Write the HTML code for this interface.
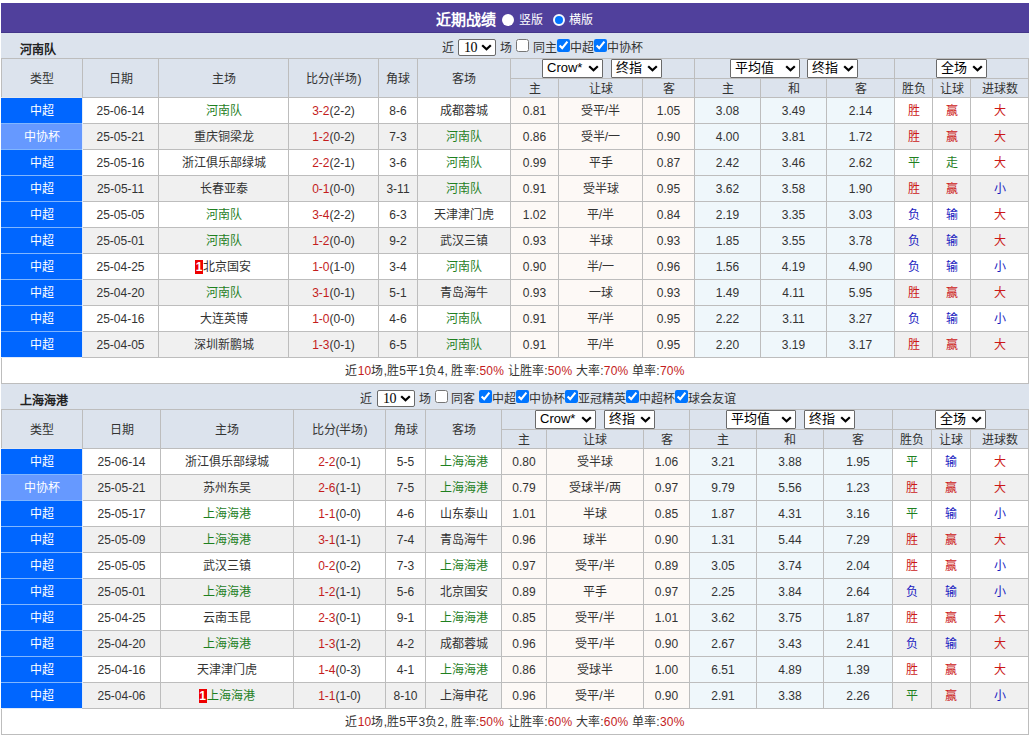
<!DOCTYPE html>
<html lang="zh-CN"><head><meta charset="utf-8"><title>近期战绩</title>
<style>
*{margin:0;padding:0;box-sizing:border-box}
html,body{width:1031px;height:736px;overflow:hidden;background:#fff}
body{position:relative;font-family:"Liberation Sans",sans-serif;font-size:12px;color:#333}
body>div{position:absolute;white-space:nowrap;overflow:visible}
.tn{font-weight:bold;color:#222}
.bd{display:inline-block;background:#e00;color:#fff;font-weight:bold;margin-left:-1px;width:8px;height:14px;line-height:14px;text-align:center;vertical-align:middle;margin-top:-2px}
.sel{position:absolute;height:19px;background:#fff;border:1px solid #6a6a6a;border-radius:1px;font-size:13px;line-height:16px;padding-left:4px;color:#000;text-align:left}
.sel svg{position:absolute;right:3px;top:5px}
.s10{position:absolute;height:17px;background:#fff;border:1px solid #6a6a6a;border-radius:2px;font-family:"Liberation Serif",serif;font-size:14px;line-height:15px;padding-left:5px;color:#000;text-align:left;letter-spacing:-0.5px}
.s10 svg{position:absolute;right:3px;top:3.5px}
.icb{position:absolute;margin:0;width:13px;height:13px}
.cb{display:inline-block;width:13px;height:13px;border:1px solid #767676;border-radius:2px;background:#fff;vertical-align:middle;position:relative;top:-1px}
.cb.on{background:#0075ff;border-color:#0075ff}
.cb.on:after{content:"";position:absolute;left:3px;top:0px;width:4px;height:8px;border-right:2px solid #fff;border-bottom:2px solid #fff;transform:rotate(40deg)}
</style></head><body>
<div style="left:1px;top:3px;width:1028px;height:30px;background:#50409c"></div>
<div style="left:1px;top:32px;width:1028px;height:1px;background:#43368a"></div>
<div style="left:1px;top:33px;width:1028px;height:1px;background:#f0ecff"></div>
<div style="left:436px;top:3px;height:30px;line-height:33px;color:#fff;font-size:15px;font-weight:900">近期战绩</div>
<div class="rd" style="left:502px;top:14px;width:12px;height:12px;border-radius:50%;background:#fff"></div>
<div style="left:519px;top:3px;height:30px;line-height:34px;color:#fff">竖版</div>
<div style="left:553px;top:14px;width:12px;height:12px;border-radius:50%;background:#0075ff;border:2px solid #f4f8ff"></div>
<div style="left:569px;top:3px;height:30px;line-height:34px;color:#fff">横版</div>
<div style="left:1px;top:33px;width:1028px;height:25px;background:#dce3ed"></div>
<div class="tn" style="left:20px;top:33px;height:25px;line-height:34px">河南队</div>
<div style="left:442px;top:33px;height:25px;line-height:31px">近</div>
<div class="s10" style="left:458px;top:39px;width:38px">10<svg width="11" height="7" viewBox="0 0 11 7"><polyline points="1.2,1.2 5.5,5.3 9.8,1.2" fill="none" stroke="#000" stroke-width="2.2"/></svg></div>
<div style="left:500px;top:33px;height:25px;line-height:31px">场</div>
<input type="checkbox" class="icb" style="left:516px;top:39px">
<div style="left:533px;top:33px;height:25px;line-height:31px">同主</div>
<input type="checkbox" class="icb" style="left:557px;top:39px" checked>
<div style="left:570px;top:33px;height:25px;line-height:31px">中超</div>
<input type="checkbox" class="icb" style="left:594px;top:39px" checked>
<div style="left:607px;top:33px;height:25px;line-height:31px">中协杯</div>
<div style="left:1px;top:58px;width:1028px;height:39px;background:#dce3ed"></div>
<div style="left:2px;top:59px;width:80px;height:38px;line-height:40px;text-align:center;">类型</div>
<div style="left:83px;top:59px;width:75px;height:38px;line-height:40px;text-align:center;">日期</div>
<div style="left:159px;top:59px;width:129px;height:38px;line-height:40px;text-align:center;">主场</div>
<div style="left:289px;top:59px;width:89px;height:38px;line-height:40px;text-align:center;">比分(半场)</div>
<div style="left:379px;top:59px;width:38px;height:38px;line-height:40px;text-align:center;">角球</div>
<div style="left:418px;top:59px;width:92px;height:38px;line-height:40px;text-align:center;">客场</div>
<div style="left:511px;top:79px;width:47px;height:18px;line-height:20px;text-align:center;line-height:21px;">主</div>
<div style="left:559px;top:79px;width:83px;height:18px;line-height:20px;text-align:center;line-height:21px;">让球</div>
<div style="left:643px;top:79px;width:51px;height:18px;line-height:20px;text-align:center;line-height:21px;">客</div>
<div style="left:695px;top:79px;width:65px;height:18px;line-height:20px;text-align:center;line-height:21px;">主</div>
<div style="left:761px;top:79px;width:65px;height:18px;line-height:20px;text-align:center;line-height:21px;">和</div>
<div style="left:827px;top:79px;width:67px;height:18px;line-height:20px;text-align:center;line-height:21px;">客</div>
<div style="left:895px;top:79px;width:37px;height:18px;line-height:20px;text-align:center;line-height:21px;">胜负</div>
<div style="left:933px;top:79px;width:37px;height:18px;line-height:20px;text-align:center;line-height:21px;">让球</div>
<div style="left:971px;top:79px;width:57px;height:18px;line-height:20px;text-align:center;line-height:21px;">进球数</div>
<div class="sel" style="left:542px;top:59px;width:61px">Crow*<svg width="11" height="7" viewBox="0 0 11 7"><polyline points="1.2,1.2 5.5,5.3 9.8,1.2" fill="none" stroke="#000" stroke-width="2.2"/></svg></div>
<div class="sel" style="left:611px;top:59px;width:51px">终指<svg width="11" height="7" viewBox="0 0 11 7"><polyline points="1.2,1.2 5.5,5.3 9.8,1.2" fill="none" stroke="#000" stroke-width="2.2"/></svg></div>
<div class="sel" style="left:730px;top:59px;width:70px">平均值<svg width="11" height="7" viewBox="0 0 11 7"><polyline points="1.2,1.2 5.5,5.3 9.8,1.2" fill="none" stroke="#000" stroke-width="2.2"/></svg></div>
<div class="sel" style="left:807px;top:59px;width:51px">终指<svg width="11" height="7" viewBox="0 0 11 7"><polyline points="1.2,1.2 5.5,5.3 9.8,1.2" fill="none" stroke="#000" stroke-width="2.2"/></svg></div>
<div class="sel" style="left:936px;top:59px;width:51px">全场<svg width="11" height="7" viewBox="0 0 11 7"><polyline points="1.2,1.2 5.5,5.3 9.8,1.2" fill="none" stroke="#000" stroke-width="2.2"/></svg></div>
<div style="left:1px;top:98px;width:81px;height:26px;background:#0066ff;line-height:27px;text-align:center;color:#fff;z-index:2">中超</div>
<div style="left:83px;top:98px;width:75px;height:25px;background:#ffffff;line-height:27px;text-align:center;">25-06-14</div>
<div style="left:159px;top:98px;width:129px;height:25px;background:#ffffff;line-height:27px;text-align:center;"><span style="color:#1f801f">河南队</span></div>
<div style="left:289px;top:98px;width:89px;height:25px;background:#ffffff;line-height:27px;text-align:center;"><span style="color:#c41c1c">3-2</span>(2-2)</div>
<div style="left:379px;top:98px;width:38px;height:25px;background:#ffffff;line-height:27px;text-align:center;">8-6</div>
<div style="left:418px;top:98px;width:92px;height:25px;background:#ffffff;line-height:27px;text-align:center;">成都蓉城</div>
<div style="left:511px;top:98px;width:47px;height:25px;background:#fdf9f6;line-height:27px;text-align:center;">0.81</div>
<div style="left:559px;top:98px;width:83px;height:25px;background:#fdf9f6;line-height:27px;text-align:center;">受平/半</div>
<div style="left:643px;top:98px;width:51px;height:25px;background:#fdf9f6;line-height:27px;text-align:center;">1.05</div>
<div style="left:695px;top:98px;width:65px;height:25px;background:#eff7fb;line-height:27px;text-align:center;">3.08</div>
<div style="left:761px;top:98px;width:65px;height:25px;background:#eff7fb;line-height:27px;text-align:center;">3.49</div>
<div style="left:827px;top:98px;width:67px;height:25px;background:#eff7fb;line-height:27px;text-align:center;">2.14</div>
<div style="left:895px;top:98px;width:37px;height:25px;background:#ffffff;line-height:27px;text-align:center;"><span style="color:#cc1818">胜</span></div>
<div style="left:933px;top:98px;width:37px;height:25px;background:#ffffff;line-height:27px;text-align:center;"><span style="color:#cc1818">赢</span></div>
<div style="left:971px;top:98px;width:57px;height:25px;background:#ffffff;line-height:27px;text-align:center;"><span style="color:#cc1818">大</span></div>
<div style="left:1px;top:124px;width:81px;height:26px;background:#6699ff;line-height:27px;text-align:center;color:#fff;z-index:2">中协杯</div>
<div style="left:83px;top:124px;width:75px;height:25px;background:#f0f0f0;line-height:27px;text-align:center;">25-05-21</div>
<div style="left:159px;top:124px;width:129px;height:25px;background:#f0f0f0;line-height:27px;text-align:center;">重庆铜梁龙</div>
<div style="left:289px;top:124px;width:89px;height:25px;background:#f0f0f0;line-height:27px;text-align:center;"><span style="color:#c41c1c">1-2</span>(0-2)</div>
<div style="left:379px;top:124px;width:38px;height:25px;background:#f0f0f0;line-height:27px;text-align:center;">7-3</div>
<div style="left:418px;top:124px;width:92px;height:25px;background:#f0f0f0;line-height:27px;text-align:center;"><span style="color:#1f801f">河南队</span></div>
<div style="left:511px;top:124px;width:47px;height:25px;background:#fdf9f6;line-height:27px;text-align:center;">0.86</div>
<div style="left:559px;top:124px;width:83px;height:25px;background:#fdf9f6;line-height:27px;text-align:center;">受半/一</div>
<div style="left:643px;top:124px;width:51px;height:25px;background:#fdf9f6;line-height:27px;text-align:center;">0.90</div>
<div style="left:695px;top:124px;width:65px;height:25px;background:#eff7fb;line-height:27px;text-align:center;">4.00</div>
<div style="left:761px;top:124px;width:65px;height:25px;background:#eff7fb;line-height:27px;text-align:center;">3.81</div>
<div style="left:827px;top:124px;width:67px;height:25px;background:#eff7fb;line-height:27px;text-align:center;">1.72</div>
<div style="left:895px;top:124px;width:37px;height:25px;background:#f0f0f0;line-height:27px;text-align:center;"><span style="color:#cc1818">胜</span></div>
<div style="left:933px;top:124px;width:37px;height:25px;background:#f0f0f0;line-height:27px;text-align:center;"><span style="color:#cc1818">赢</span></div>
<div style="left:971px;top:124px;width:57px;height:25px;background:#f0f0f0;line-height:27px;text-align:center;"><span style="color:#cc1818">大</span></div>
<div style="left:1px;top:150px;width:81px;height:26px;background:#0066ff;line-height:27px;text-align:center;color:#fff;z-index:2">中超</div>
<div style="left:83px;top:150px;width:75px;height:25px;background:#ffffff;line-height:27px;text-align:center;">25-05-16</div>
<div style="left:159px;top:150px;width:129px;height:25px;background:#ffffff;line-height:27px;text-align:center;">浙江俱乐部绿城</div>
<div style="left:289px;top:150px;width:89px;height:25px;background:#ffffff;line-height:27px;text-align:center;"><span style="color:#c41c1c">2-2</span>(2-1)</div>
<div style="left:379px;top:150px;width:38px;height:25px;background:#ffffff;line-height:27px;text-align:center;">3-6</div>
<div style="left:418px;top:150px;width:92px;height:25px;background:#ffffff;line-height:27px;text-align:center;"><span style="color:#1f801f">河南队</span></div>
<div style="left:511px;top:150px;width:47px;height:25px;background:#fdf9f6;line-height:27px;text-align:center;">0.99</div>
<div style="left:559px;top:150px;width:83px;height:25px;background:#fdf9f6;line-height:27px;text-align:center;">平手</div>
<div style="left:643px;top:150px;width:51px;height:25px;background:#fdf9f6;line-height:27px;text-align:center;">0.87</div>
<div style="left:695px;top:150px;width:65px;height:25px;background:#eff7fb;line-height:27px;text-align:center;">2.42</div>
<div style="left:761px;top:150px;width:65px;height:25px;background:#eff7fb;line-height:27px;text-align:center;">3.46</div>
<div style="left:827px;top:150px;width:67px;height:25px;background:#eff7fb;line-height:27px;text-align:center;">2.62</div>
<div style="left:895px;top:150px;width:37px;height:25px;background:#ffffff;line-height:27px;text-align:center;"><span style="color:#1f801f">平</span></div>
<div style="left:933px;top:150px;width:37px;height:25px;background:#ffffff;line-height:27px;text-align:center;"><span style="color:#1f801f">走</span></div>
<div style="left:971px;top:150px;width:57px;height:25px;background:#ffffff;line-height:27px;text-align:center;"><span style="color:#cc1818">大</span></div>
<div style="left:1px;top:176px;width:81px;height:26px;background:#0066ff;line-height:27px;text-align:center;color:#fff;z-index:2">中超</div>
<div style="left:83px;top:176px;width:75px;height:25px;background:#f0f0f0;line-height:27px;text-align:center;">25-05-11</div>
<div style="left:159px;top:176px;width:129px;height:25px;background:#f0f0f0;line-height:27px;text-align:center;">长春亚泰</div>
<div style="left:289px;top:176px;width:89px;height:25px;background:#f0f0f0;line-height:27px;text-align:center;"><span style="color:#c41c1c">0-1</span>(0-0)</div>
<div style="left:379px;top:176px;width:38px;height:25px;background:#f0f0f0;line-height:27px;text-align:center;">3-11</div>
<div style="left:418px;top:176px;width:92px;height:25px;background:#f0f0f0;line-height:27px;text-align:center;"><span style="color:#1f801f">河南队</span></div>
<div style="left:511px;top:176px;width:47px;height:25px;background:#fdf9f6;line-height:27px;text-align:center;">0.91</div>
<div style="left:559px;top:176px;width:83px;height:25px;background:#fdf9f6;line-height:27px;text-align:center;">受半球</div>
<div style="left:643px;top:176px;width:51px;height:25px;background:#fdf9f6;line-height:27px;text-align:center;">0.95</div>
<div style="left:695px;top:176px;width:65px;height:25px;background:#eff7fb;line-height:27px;text-align:center;">3.62</div>
<div style="left:761px;top:176px;width:65px;height:25px;background:#eff7fb;line-height:27px;text-align:center;">3.58</div>
<div style="left:827px;top:176px;width:67px;height:25px;background:#eff7fb;line-height:27px;text-align:center;">1.90</div>
<div style="left:895px;top:176px;width:37px;height:25px;background:#f0f0f0;line-height:27px;text-align:center;"><span style="color:#cc1818">胜</span></div>
<div style="left:933px;top:176px;width:37px;height:25px;background:#f0f0f0;line-height:27px;text-align:center;"><span style="color:#cc1818">赢</span></div>
<div style="left:971px;top:176px;width:57px;height:25px;background:#f0f0f0;line-height:27px;text-align:center;"><span style="color:#1a1ac0">小</span></div>
<div style="left:1px;top:202px;width:81px;height:26px;background:#0066ff;line-height:27px;text-align:center;color:#fff;z-index:2">中超</div>
<div style="left:83px;top:202px;width:75px;height:25px;background:#ffffff;line-height:27px;text-align:center;">25-05-05</div>
<div style="left:159px;top:202px;width:129px;height:25px;background:#ffffff;line-height:27px;text-align:center;"><span style="color:#1f801f">河南队</span></div>
<div style="left:289px;top:202px;width:89px;height:25px;background:#ffffff;line-height:27px;text-align:center;"><span style="color:#c41c1c">3-4</span>(2-2)</div>
<div style="left:379px;top:202px;width:38px;height:25px;background:#ffffff;line-height:27px;text-align:center;">6-3</div>
<div style="left:418px;top:202px;width:92px;height:25px;background:#ffffff;line-height:27px;text-align:center;">天津津门虎</div>
<div style="left:511px;top:202px;width:47px;height:25px;background:#fdf9f6;line-height:27px;text-align:center;">1.02</div>
<div style="left:559px;top:202px;width:83px;height:25px;background:#fdf9f6;line-height:27px;text-align:center;">平/半</div>
<div style="left:643px;top:202px;width:51px;height:25px;background:#fdf9f6;line-height:27px;text-align:center;">0.84</div>
<div style="left:695px;top:202px;width:65px;height:25px;background:#eff7fb;line-height:27px;text-align:center;">2.19</div>
<div style="left:761px;top:202px;width:65px;height:25px;background:#eff7fb;line-height:27px;text-align:center;">3.35</div>
<div style="left:827px;top:202px;width:67px;height:25px;background:#eff7fb;line-height:27px;text-align:center;">3.03</div>
<div style="left:895px;top:202px;width:37px;height:25px;background:#ffffff;line-height:27px;text-align:center;"><span style="color:#1a1ac0">负</span></div>
<div style="left:933px;top:202px;width:37px;height:25px;background:#ffffff;line-height:27px;text-align:center;"><span style="color:#1a1ac0">输</span></div>
<div style="left:971px;top:202px;width:57px;height:25px;background:#ffffff;line-height:27px;text-align:center;"><span style="color:#cc1818">大</span></div>
<div style="left:1px;top:228px;width:81px;height:26px;background:#0066ff;line-height:27px;text-align:center;color:#fff;z-index:2">中超</div>
<div style="left:83px;top:228px;width:75px;height:25px;background:#f0f0f0;line-height:27px;text-align:center;">25-05-01</div>
<div style="left:159px;top:228px;width:129px;height:25px;background:#f0f0f0;line-height:27px;text-align:center;"><span style="color:#1f801f">河南队</span></div>
<div style="left:289px;top:228px;width:89px;height:25px;background:#f0f0f0;line-height:27px;text-align:center;"><span style="color:#c41c1c">1-2</span>(0-0)</div>
<div style="left:379px;top:228px;width:38px;height:25px;background:#f0f0f0;line-height:27px;text-align:center;">9-2</div>
<div style="left:418px;top:228px;width:92px;height:25px;background:#f0f0f0;line-height:27px;text-align:center;">武汉三镇</div>
<div style="left:511px;top:228px;width:47px;height:25px;background:#fdf9f6;line-height:27px;text-align:center;">0.93</div>
<div style="left:559px;top:228px;width:83px;height:25px;background:#fdf9f6;line-height:27px;text-align:center;">半球</div>
<div style="left:643px;top:228px;width:51px;height:25px;background:#fdf9f6;line-height:27px;text-align:center;">0.93</div>
<div style="left:695px;top:228px;width:65px;height:25px;background:#eff7fb;line-height:27px;text-align:center;">1.85</div>
<div style="left:761px;top:228px;width:65px;height:25px;background:#eff7fb;line-height:27px;text-align:center;">3.55</div>
<div style="left:827px;top:228px;width:67px;height:25px;background:#eff7fb;line-height:27px;text-align:center;">3.78</div>
<div style="left:895px;top:228px;width:37px;height:25px;background:#f0f0f0;line-height:27px;text-align:center;"><span style="color:#1a1ac0">负</span></div>
<div style="left:933px;top:228px;width:37px;height:25px;background:#f0f0f0;line-height:27px;text-align:center;"><span style="color:#1a1ac0">输</span></div>
<div style="left:971px;top:228px;width:57px;height:25px;background:#f0f0f0;line-height:27px;text-align:center;"><span style="color:#cc1818">大</span></div>
<div style="left:1px;top:254px;width:81px;height:26px;background:#0066ff;line-height:27px;text-align:center;color:#fff;z-index:2">中超</div>
<div style="left:83px;top:254px;width:75px;height:25px;background:#ffffff;line-height:27px;text-align:center;">25-04-25</div>
<div style="left:159px;top:254px;width:129px;height:25px;background:#ffffff;line-height:27px;text-align:center;"><span class="bd">1</span>北京国安</div>
<div style="left:289px;top:254px;width:89px;height:25px;background:#ffffff;line-height:27px;text-align:center;"><span style="color:#c41c1c">1-0</span>(1-0)</div>
<div style="left:379px;top:254px;width:38px;height:25px;background:#ffffff;line-height:27px;text-align:center;">3-4</div>
<div style="left:418px;top:254px;width:92px;height:25px;background:#ffffff;line-height:27px;text-align:center;"><span style="color:#1f801f">河南队</span></div>
<div style="left:511px;top:254px;width:47px;height:25px;background:#fdf9f6;line-height:27px;text-align:center;">0.90</div>
<div style="left:559px;top:254px;width:83px;height:25px;background:#fdf9f6;line-height:27px;text-align:center;">半/一</div>
<div style="left:643px;top:254px;width:51px;height:25px;background:#fdf9f6;line-height:27px;text-align:center;">0.96</div>
<div style="left:695px;top:254px;width:65px;height:25px;background:#eff7fb;line-height:27px;text-align:center;">1.56</div>
<div style="left:761px;top:254px;width:65px;height:25px;background:#eff7fb;line-height:27px;text-align:center;">4.19</div>
<div style="left:827px;top:254px;width:67px;height:25px;background:#eff7fb;line-height:27px;text-align:center;">4.90</div>
<div style="left:895px;top:254px;width:37px;height:25px;background:#ffffff;line-height:27px;text-align:center;"><span style="color:#1a1ac0">负</span></div>
<div style="left:933px;top:254px;width:37px;height:25px;background:#ffffff;line-height:27px;text-align:center;"><span style="color:#1a1ac0">输</span></div>
<div style="left:971px;top:254px;width:57px;height:25px;background:#ffffff;line-height:27px;text-align:center;"><span style="color:#1a1ac0">小</span></div>
<div style="left:1px;top:280px;width:81px;height:26px;background:#0066ff;line-height:27px;text-align:center;color:#fff;z-index:2">中超</div>
<div style="left:83px;top:280px;width:75px;height:25px;background:#f0f0f0;line-height:27px;text-align:center;">25-04-20</div>
<div style="left:159px;top:280px;width:129px;height:25px;background:#f0f0f0;line-height:27px;text-align:center;"><span style="color:#1f801f">河南队</span></div>
<div style="left:289px;top:280px;width:89px;height:25px;background:#f0f0f0;line-height:27px;text-align:center;"><span style="color:#c41c1c">3-1</span>(0-1)</div>
<div style="left:379px;top:280px;width:38px;height:25px;background:#f0f0f0;line-height:27px;text-align:center;">5-1</div>
<div style="left:418px;top:280px;width:92px;height:25px;background:#f0f0f0;line-height:27px;text-align:center;">青岛海牛</div>
<div style="left:511px;top:280px;width:47px;height:25px;background:#fdf9f6;line-height:27px;text-align:center;">0.93</div>
<div style="left:559px;top:280px;width:83px;height:25px;background:#fdf9f6;line-height:27px;text-align:center;">一球</div>
<div style="left:643px;top:280px;width:51px;height:25px;background:#fdf9f6;line-height:27px;text-align:center;">0.93</div>
<div style="left:695px;top:280px;width:65px;height:25px;background:#eff7fb;line-height:27px;text-align:center;">1.49</div>
<div style="left:761px;top:280px;width:65px;height:25px;background:#eff7fb;line-height:27px;text-align:center;">4.11</div>
<div style="left:827px;top:280px;width:67px;height:25px;background:#eff7fb;line-height:27px;text-align:center;">5.95</div>
<div style="left:895px;top:280px;width:37px;height:25px;background:#f0f0f0;line-height:27px;text-align:center;"><span style="color:#cc1818">胜</span></div>
<div style="left:933px;top:280px;width:37px;height:25px;background:#f0f0f0;line-height:27px;text-align:center;"><span style="color:#cc1818">赢</span></div>
<div style="left:971px;top:280px;width:57px;height:25px;background:#f0f0f0;line-height:27px;text-align:center;"><span style="color:#cc1818">大</span></div>
<div style="left:1px;top:306px;width:81px;height:26px;background:#0066ff;line-height:27px;text-align:center;color:#fff;z-index:2">中超</div>
<div style="left:83px;top:306px;width:75px;height:25px;background:#ffffff;line-height:27px;text-align:center;">25-04-16</div>
<div style="left:159px;top:306px;width:129px;height:25px;background:#ffffff;line-height:27px;text-align:center;">大连英博</div>
<div style="left:289px;top:306px;width:89px;height:25px;background:#ffffff;line-height:27px;text-align:center;"><span style="color:#c41c1c">1-0</span>(0-0)</div>
<div style="left:379px;top:306px;width:38px;height:25px;background:#ffffff;line-height:27px;text-align:center;">4-6</div>
<div style="left:418px;top:306px;width:92px;height:25px;background:#ffffff;line-height:27px;text-align:center;"><span style="color:#1f801f">河南队</span></div>
<div style="left:511px;top:306px;width:47px;height:25px;background:#fdf9f6;line-height:27px;text-align:center;">0.91</div>
<div style="left:559px;top:306px;width:83px;height:25px;background:#fdf9f6;line-height:27px;text-align:center;">平/半</div>
<div style="left:643px;top:306px;width:51px;height:25px;background:#fdf9f6;line-height:27px;text-align:center;">0.95</div>
<div style="left:695px;top:306px;width:65px;height:25px;background:#eff7fb;line-height:27px;text-align:center;">2.22</div>
<div style="left:761px;top:306px;width:65px;height:25px;background:#eff7fb;line-height:27px;text-align:center;">3.11</div>
<div style="left:827px;top:306px;width:67px;height:25px;background:#eff7fb;line-height:27px;text-align:center;">3.27</div>
<div style="left:895px;top:306px;width:37px;height:25px;background:#ffffff;line-height:27px;text-align:center;"><span style="color:#1a1ac0">负</span></div>
<div style="left:933px;top:306px;width:37px;height:25px;background:#ffffff;line-height:27px;text-align:center;"><span style="color:#1a1ac0">输</span></div>
<div style="left:971px;top:306px;width:57px;height:25px;background:#ffffff;line-height:27px;text-align:center;"><span style="color:#1a1ac0">小</span></div>
<div style="left:1px;top:332px;width:81px;height:25px;background:#0066ff;line-height:27px;text-align:center;color:#fff;z-index:2">中超</div>
<div style="left:83px;top:332px;width:75px;height:25px;background:#f0f0f0;line-height:27px;text-align:center;">25-04-05</div>
<div style="left:159px;top:332px;width:129px;height:25px;background:#f0f0f0;line-height:27px;text-align:center;">深圳新鹏城</div>
<div style="left:289px;top:332px;width:89px;height:25px;background:#f0f0f0;line-height:27px;text-align:center;"><span style="color:#c41c1c">1-3</span>(0-1)</div>
<div style="left:379px;top:332px;width:38px;height:25px;background:#f0f0f0;line-height:27px;text-align:center;">6-5</div>
<div style="left:418px;top:332px;width:92px;height:25px;background:#f0f0f0;line-height:27px;text-align:center;"><span style="color:#1f801f">河南队</span></div>
<div style="left:511px;top:332px;width:47px;height:25px;background:#fdf9f6;line-height:27px;text-align:center;">0.91</div>
<div style="left:559px;top:332px;width:83px;height:25px;background:#fdf9f6;line-height:27px;text-align:center;">平/半</div>
<div style="left:643px;top:332px;width:51px;height:25px;background:#fdf9f6;line-height:27px;text-align:center;">0.95</div>
<div style="left:695px;top:332px;width:65px;height:25px;background:#eff7fb;line-height:27px;text-align:center;">2.20</div>
<div style="left:761px;top:332px;width:65px;height:25px;background:#eff7fb;line-height:27px;text-align:center;">3.19</div>
<div style="left:827px;top:332px;width:67px;height:25px;background:#eff7fb;line-height:27px;text-align:center;">3.17</div>
<div style="left:895px;top:332px;width:37px;height:25px;background:#f0f0f0;line-height:27px;text-align:center;"><span style="color:#cc1818">胜</span></div>
<div style="left:933px;top:332px;width:37px;height:25px;background:#f0f0f0;line-height:27px;text-align:center;"><span style="color:#cc1818">赢</span></div>
<div style="left:971px;top:332px;width:57px;height:25px;background:#f0f0f0;line-height:27px;text-align:center;"><span style="color:#cc1818">大</span></div>
<div style="left:2px;top:358px;width:1026px;height:25px;background:#ffffff;line-height:27px;text-align:center;letter-spacing:0.2px;">近<span style="color:#c41c1c">10</span>场,胜5平1负4, 胜率:<span style="color:#c41c1c">50%</span> 让胜率:<span style="color:#c41c1c">50%</span> 大率:<span style="color:#c41c1c">70%</span> 单率:<span style="color:#c41c1c">70%</span></div>
<div style="left:1px;top:58px;width:1028px;height:1px;background:#bdbdbd"></div>
<div style="left:510px;top:78px;width:519px;height:1px;background:#bdbdbd"></div>
<div style="left:1px;top:97px;width:1028px;height:1px;background:#bdbdbd"></div>
<div style="left:1px;top:123px;width:1028px;height:1px;background:#bdbdbd"></div>
<div style="left:1px;top:149px;width:1028px;height:1px;background:#bdbdbd"></div>
<div style="left:1px;top:175px;width:1028px;height:1px;background:#bdbdbd"></div>
<div style="left:1px;top:201px;width:1028px;height:1px;background:#bdbdbd"></div>
<div style="left:1px;top:227px;width:1028px;height:1px;background:#bdbdbd"></div>
<div style="left:1px;top:253px;width:1028px;height:1px;background:#bdbdbd"></div>
<div style="left:1px;top:279px;width:1028px;height:1px;background:#bdbdbd"></div>
<div style="left:1px;top:305px;width:1028px;height:1px;background:#bdbdbd"></div>
<div style="left:1px;top:331px;width:1028px;height:1px;background:#bdbdbd"></div>
<div style="left:1px;top:357px;width:1028px;height:1px;background:#bdbdbd"></div>
<div style="left:1px;top:383px;width:1028px;height:1px;background:#bdbdbd"></div>
<div style="left:1px;top:58px;width:1px;height:326px;background:#bdbdbd"></div>
<div style="left:82px;top:58px;width:1px;height:300px;background:#bdbdbd"></div>
<div style="left:158px;top:58px;width:1px;height:300px;background:#bdbdbd"></div>
<div style="left:288px;top:58px;width:1px;height:300px;background:#bdbdbd"></div>
<div style="left:378px;top:58px;width:1px;height:300px;background:#bdbdbd"></div>
<div style="left:417px;top:58px;width:1px;height:300px;background:#bdbdbd"></div>
<div style="left:510px;top:58px;width:1px;height:300px;background:#bdbdbd"></div>
<div style="left:558px;top:78px;width:1px;height:280px;background:#bdbdbd"></div>
<div style="left:642px;top:78px;width:1px;height:280px;background:#bdbdbd"></div>
<div style="left:694px;top:58px;width:1px;height:300px;background:#bdbdbd"></div>
<div style="left:760px;top:78px;width:1px;height:280px;background:#bdbdbd"></div>
<div style="left:826px;top:78px;width:1px;height:280px;background:#bdbdbd"></div>
<div style="left:894px;top:58px;width:1px;height:300px;background:#bdbdbd"></div>
<div style="left:932px;top:78px;width:1px;height:280px;background:#bdbdbd"></div>
<div style="left:970px;top:78px;width:1px;height:280px;background:#bdbdbd"></div>
<div style="left:1028px;top:58px;width:1px;height:326px;background:#bdbdbd"></div>
<div style="left:1px;top:123px;width:81px;height:1px;background:#80b6ff;z-index:3"></div>
<div style="left:1px;top:149px;width:81px;height:1px;background:#80b6ff;z-index:3"></div>
<div style="left:1px;top:175px;width:81px;height:1px;background:#80b6ff;z-index:3"></div>
<div style="left:1px;top:201px;width:81px;height:1px;background:#80b6ff;z-index:3"></div>
<div style="left:1px;top:227px;width:81px;height:1px;background:#80b6ff;z-index:3"></div>
<div style="left:1px;top:253px;width:81px;height:1px;background:#80b6ff;z-index:3"></div>
<div style="left:1px;top:279px;width:81px;height:1px;background:#80b6ff;z-index:3"></div>
<div style="left:1px;top:305px;width:81px;height:1px;background:#80b6ff;z-index:3"></div>
<div style="left:1px;top:331px;width:81px;height:1px;background:#80b6ff;z-index:3"></div>
<div style="left:82px;top:98px;width:1px;height:259px;background:#e2ebf8;z-index:3"></div>
<div style="left:1px;top:97px;width:81px;height:1px;background:#e4e8ef;z-index:3"></div>
<div style="left:1px;top:357px;width:81px;height:1px;background:#dfe9fb;z-index:3"></div>
<div style="left:1px;top:384px;width:1028px;height:25px;background:#dce3ed"></div>
<div class="tn" style="left:20px;top:384px;height:25px;line-height:34px">上海海港</div>
<div style="left:360px;top:384px;height:25px;line-height:31px">近</div>
<div class="s10" style="left:377px;top:390px;width:38px">10<svg width="11" height="7" viewBox="0 0 11 7"><polyline points="1.2,1.2 5.5,5.3 9.8,1.2" fill="none" stroke="#000" stroke-width="2.2"/></svg></div>
<div style="left:419px;top:384px;height:25px;line-height:31px">场</div>
<input type="checkbox" class="icb" style="left:435px;top:390px">
<div style="left:451px;top:384px;height:25px;line-height:31px">同客</div>
<input type="checkbox" class="icb" style="left:479px;top:390px" checked>
<div style="left:492px;top:384px;height:25px;line-height:31px">中超</div>
<input type="checkbox" class="icb" style="left:516px;top:390px" checked>
<div style="left:529px;top:384px;height:25px;line-height:31px">中协杯</div>
<input type="checkbox" class="icb" style="left:565px;top:390px" checked>
<div style="left:578px;top:384px;height:25px;line-height:31px">亚冠精英</div>
<input type="checkbox" class="icb" style="left:626px;top:390px" checked>
<div style="left:639px;top:384px;height:25px;line-height:31px">中超杯</div>
<input type="checkbox" class="icb" style="left:675px;top:390px" checked>
<div style="left:688px;top:384px;height:25px;line-height:31px">球会友谊</div>
<div style="left:1px;top:409px;width:1028px;height:39px;background:#dce3ed"></div>
<div style="left:2px;top:410px;width:80px;height:38px;line-height:40px;text-align:center;">类型</div>
<div style="left:83px;top:410px;width:77px;height:38px;line-height:40px;text-align:center;">日期</div>
<div style="left:161px;top:410px;width:132px;height:38px;line-height:40px;text-align:center;">主场</div>
<div style="left:294px;top:410px;width:91px;height:38px;line-height:40px;text-align:center;">比分(半场)</div>
<div style="left:386px;top:410px;width:39px;height:38px;line-height:40px;text-align:center;">角球</div>
<div style="left:426px;top:410px;width:75px;height:38px;line-height:40px;text-align:center;">客场</div>
<div style="left:502px;top:430px;width:44px;height:18px;line-height:20px;text-align:center;line-height:21px;">主</div>
<div style="left:547px;top:430px;width:96px;height:18px;line-height:20px;text-align:center;line-height:21px;">让球</div>
<div style="left:644px;top:430px;width:45px;height:18px;line-height:20px;text-align:center;line-height:21px;">客</div>
<div style="left:690px;top:430px;width:66px;height:18px;line-height:20px;text-align:center;line-height:21px;">主</div>
<div style="left:757px;top:430px;width:66px;height:18px;line-height:20px;text-align:center;line-height:21px;">和</div>
<div style="left:824px;top:430px;width:68px;height:18px;line-height:20px;text-align:center;line-height:21px;">客</div>
<div style="left:893px;top:430px;width:38px;height:18px;line-height:20px;text-align:center;line-height:21px;">胜负</div>
<div style="left:932px;top:430px;width:38px;height:18px;line-height:20px;text-align:center;line-height:21px;">让球</div>
<div style="left:971px;top:430px;width:57px;height:18px;line-height:20px;text-align:center;line-height:21px;">进球数</div>
<div class="sel" style="left:535px;top:410px;width:61px">Crow*<svg width="11" height="7" viewBox="0 0 11 7"><polyline points="1.2,1.2 5.5,5.3 9.8,1.2" fill="none" stroke="#000" stroke-width="2.2"/></svg></div>
<div class="sel" style="left:604px;top:410px;width:51px">终指<svg width="11" height="7" viewBox="0 0 11 7"><polyline points="1.2,1.2 5.5,5.3 9.8,1.2" fill="none" stroke="#000" stroke-width="2.2"/></svg></div>
<div class="sel" style="left:726px;top:410px;width:70px">平均值<svg width="11" height="7" viewBox="0 0 11 7"><polyline points="1.2,1.2 5.5,5.3 9.8,1.2" fill="none" stroke="#000" stroke-width="2.2"/></svg></div>
<div class="sel" style="left:804px;top:410px;width:51px">终指<svg width="11" height="7" viewBox="0 0 11 7"><polyline points="1.2,1.2 5.5,5.3 9.8,1.2" fill="none" stroke="#000" stroke-width="2.2"/></svg></div>
<div class="sel" style="left:935px;top:410px;width:51px">全场<svg width="11" height="7" viewBox="0 0 11 7"><polyline points="1.2,1.2 5.5,5.3 9.8,1.2" fill="none" stroke="#000" stroke-width="2.2"/></svg></div>
<div style="left:1px;top:449px;width:81px;height:26px;background:#0066ff;line-height:27px;text-align:center;color:#fff;z-index:2">中超</div>
<div style="left:83px;top:449px;width:77px;height:25px;background:#ffffff;line-height:27px;text-align:center;">25-06-14</div>
<div style="left:161px;top:449px;width:132px;height:25px;background:#ffffff;line-height:27px;text-align:center;">浙江俱乐部绿城</div>
<div style="left:294px;top:449px;width:91px;height:25px;background:#ffffff;line-height:27px;text-align:center;"><span style="color:#c41c1c">2-2</span>(0-1)</div>
<div style="left:386px;top:449px;width:39px;height:25px;background:#ffffff;line-height:27px;text-align:center;">5-5</div>
<div style="left:426px;top:449px;width:75px;height:25px;background:#ffffff;line-height:27px;text-align:center;"><span style="color:#1f801f">上海海港</span></div>
<div style="left:502px;top:449px;width:44px;height:25px;background:#fdf9f6;line-height:27px;text-align:center;">0.80</div>
<div style="left:547px;top:449px;width:96px;height:25px;background:#fdf9f6;line-height:27px;text-align:center;">受半球</div>
<div style="left:644px;top:449px;width:45px;height:25px;background:#fdf9f6;line-height:27px;text-align:center;">1.06</div>
<div style="left:690px;top:449px;width:66px;height:25px;background:#eff7fb;line-height:27px;text-align:center;">3.21</div>
<div style="left:757px;top:449px;width:66px;height:25px;background:#eff7fb;line-height:27px;text-align:center;">3.88</div>
<div style="left:824px;top:449px;width:68px;height:25px;background:#eff7fb;line-height:27px;text-align:center;">1.95</div>
<div style="left:893px;top:449px;width:38px;height:25px;background:#ffffff;line-height:27px;text-align:center;"><span style="color:#1f801f">平</span></div>
<div style="left:932px;top:449px;width:38px;height:25px;background:#ffffff;line-height:27px;text-align:center;"><span style="color:#1a1ac0">输</span></div>
<div style="left:971px;top:449px;width:57px;height:25px;background:#ffffff;line-height:27px;text-align:center;"><span style="color:#cc1818">大</span></div>
<div style="left:1px;top:475px;width:81px;height:26px;background:#6699ff;line-height:27px;text-align:center;color:#fff;z-index:2">中协杯</div>
<div style="left:83px;top:475px;width:77px;height:25px;background:#f0f0f0;line-height:27px;text-align:center;">25-05-21</div>
<div style="left:161px;top:475px;width:132px;height:25px;background:#f0f0f0;line-height:27px;text-align:center;">苏州东吴</div>
<div style="left:294px;top:475px;width:91px;height:25px;background:#f0f0f0;line-height:27px;text-align:center;"><span style="color:#c41c1c">2-6</span>(1-1)</div>
<div style="left:386px;top:475px;width:39px;height:25px;background:#f0f0f0;line-height:27px;text-align:center;">7-5</div>
<div style="left:426px;top:475px;width:75px;height:25px;background:#f0f0f0;line-height:27px;text-align:center;"><span style="color:#1f801f">上海海港</span></div>
<div style="left:502px;top:475px;width:44px;height:25px;background:#fdf9f6;line-height:27px;text-align:center;">0.79</div>
<div style="left:547px;top:475px;width:96px;height:25px;background:#fdf9f6;line-height:27px;text-align:center;">受球半/两</div>
<div style="left:644px;top:475px;width:45px;height:25px;background:#fdf9f6;line-height:27px;text-align:center;">0.97</div>
<div style="left:690px;top:475px;width:66px;height:25px;background:#eff7fb;line-height:27px;text-align:center;">9.79</div>
<div style="left:757px;top:475px;width:66px;height:25px;background:#eff7fb;line-height:27px;text-align:center;">5.56</div>
<div style="left:824px;top:475px;width:68px;height:25px;background:#eff7fb;line-height:27px;text-align:center;">1.23</div>
<div style="left:893px;top:475px;width:38px;height:25px;background:#f0f0f0;line-height:27px;text-align:center;"><span style="color:#cc1818">胜</span></div>
<div style="left:932px;top:475px;width:38px;height:25px;background:#f0f0f0;line-height:27px;text-align:center;"><span style="color:#cc1818">赢</span></div>
<div style="left:971px;top:475px;width:57px;height:25px;background:#f0f0f0;line-height:27px;text-align:center;"><span style="color:#cc1818">大</span></div>
<div style="left:1px;top:501px;width:81px;height:26px;background:#0066ff;line-height:27px;text-align:center;color:#fff;z-index:2">中超</div>
<div style="left:83px;top:501px;width:77px;height:25px;background:#ffffff;line-height:27px;text-align:center;">25-05-17</div>
<div style="left:161px;top:501px;width:132px;height:25px;background:#ffffff;line-height:27px;text-align:center;"><span style="color:#1f801f">上海海港</span></div>
<div style="left:294px;top:501px;width:91px;height:25px;background:#ffffff;line-height:27px;text-align:center;"><span style="color:#c41c1c">1-1</span>(0-0)</div>
<div style="left:386px;top:501px;width:39px;height:25px;background:#ffffff;line-height:27px;text-align:center;">4-6</div>
<div style="left:426px;top:501px;width:75px;height:25px;background:#ffffff;line-height:27px;text-align:center;">山东泰山</div>
<div style="left:502px;top:501px;width:44px;height:25px;background:#fdf9f6;line-height:27px;text-align:center;">1.01</div>
<div style="left:547px;top:501px;width:96px;height:25px;background:#fdf9f6;line-height:27px;text-align:center;">半球</div>
<div style="left:644px;top:501px;width:45px;height:25px;background:#fdf9f6;line-height:27px;text-align:center;">0.85</div>
<div style="left:690px;top:501px;width:66px;height:25px;background:#eff7fb;line-height:27px;text-align:center;">1.87</div>
<div style="left:757px;top:501px;width:66px;height:25px;background:#eff7fb;line-height:27px;text-align:center;">4.31</div>
<div style="left:824px;top:501px;width:68px;height:25px;background:#eff7fb;line-height:27px;text-align:center;">3.16</div>
<div style="left:893px;top:501px;width:38px;height:25px;background:#ffffff;line-height:27px;text-align:center;"><span style="color:#1f801f">平</span></div>
<div style="left:932px;top:501px;width:38px;height:25px;background:#ffffff;line-height:27px;text-align:center;"><span style="color:#1a1ac0">输</span></div>
<div style="left:971px;top:501px;width:57px;height:25px;background:#ffffff;line-height:27px;text-align:center;"><span style="color:#1a1ac0">小</span></div>
<div style="left:1px;top:527px;width:81px;height:26px;background:#0066ff;line-height:27px;text-align:center;color:#fff;z-index:2">中超</div>
<div style="left:83px;top:527px;width:77px;height:25px;background:#f0f0f0;line-height:27px;text-align:center;">25-05-09</div>
<div style="left:161px;top:527px;width:132px;height:25px;background:#f0f0f0;line-height:27px;text-align:center;"><span style="color:#1f801f">上海海港</span></div>
<div style="left:294px;top:527px;width:91px;height:25px;background:#f0f0f0;line-height:27px;text-align:center;"><span style="color:#c41c1c">3-1</span>(1-1)</div>
<div style="left:386px;top:527px;width:39px;height:25px;background:#f0f0f0;line-height:27px;text-align:center;">7-4</div>
<div style="left:426px;top:527px;width:75px;height:25px;background:#f0f0f0;line-height:27px;text-align:center;">青岛海牛</div>
<div style="left:502px;top:527px;width:44px;height:25px;background:#fdf9f6;line-height:27px;text-align:center;">0.96</div>
<div style="left:547px;top:527px;width:96px;height:25px;background:#fdf9f6;line-height:27px;text-align:center;">球半</div>
<div style="left:644px;top:527px;width:45px;height:25px;background:#fdf9f6;line-height:27px;text-align:center;">0.90</div>
<div style="left:690px;top:527px;width:66px;height:25px;background:#eff7fb;line-height:27px;text-align:center;">1.31</div>
<div style="left:757px;top:527px;width:66px;height:25px;background:#eff7fb;line-height:27px;text-align:center;">5.44</div>
<div style="left:824px;top:527px;width:68px;height:25px;background:#eff7fb;line-height:27px;text-align:center;">7.29</div>
<div style="left:893px;top:527px;width:38px;height:25px;background:#f0f0f0;line-height:27px;text-align:center;"><span style="color:#cc1818">胜</span></div>
<div style="left:932px;top:527px;width:38px;height:25px;background:#f0f0f0;line-height:27px;text-align:center;"><span style="color:#cc1818">赢</span></div>
<div style="left:971px;top:527px;width:57px;height:25px;background:#f0f0f0;line-height:27px;text-align:center;"><span style="color:#cc1818">大</span></div>
<div style="left:1px;top:553px;width:81px;height:26px;background:#0066ff;line-height:27px;text-align:center;color:#fff;z-index:2">中超</div>
<div style="left:83px;top:553px;width:77px;height:25px;background:#ffffff;line-height:27px;text-align:center;">25-05-05</div>
<div style="left:161px;top:553px;width:132px;height:25px;background:#ffffff;line-height:27px;text-align:center;">武汉三镇</div>
<div style="left:294px;top:553px;width:91px;height:25px;background:#ffffff;line-height:27px;text-align:center;"><span style="color:#c41c1c">0-2</span>(0-2)</div>
<div style="left:386px;top:553px;width:39px;height:25px;background:#ffffff;line-height:27px;text-align:center;">7-3</div>
<div style="left:426px;top:553px;width:75px;height:25px;background:#ffffff;line-height:27px;text-align:center;"><span style="color:#1f801f">上海海港</span></div>
<div style="left:502px;top:553px;width:44px;height:25px;background:#fdf9f6;line-height:27px;text-align:center;">0.97</div>
<div style="left:547px;top:553px;width:96px;height:25px;background:#fdf9f6;line-height:27px;text-align:center;">受平/半</div>
<div style="left:644px;top:553px;width:45px;height:25px;background:#fdf9f6;line-height:27px;text-align:center;">0.89</div>
<div style="left:690px;top:553px;width:66px;height:25px;background:#eff7fb;line-height:27px;text-align:center;">3.05</div>
<div style="left:757px;top:553px;width:66px;height:25px;background:#eff7fb;line-height:27px;text-align:center;">3.74</div>
<div style="left:824px;top:553px;width:68px;height:25px;background:#eff7fb;line-height:27px;text-align:center;">2.04</div>
<div style="left:893px;top:553px;width:38px;height:25px;background:#ffffff;line-height:27px;text-align:center;"><span style="color:#cc1818">胜</span></div>
<div style="left:932px;top:553px;width:38px;height:25px;background:#ffffff;line-height:27px;text-align:center;"><span style="color:#cc1818">赢</span></div>
<div style="left:971px;top:553px;width:57px;height:25px;background:#ffffff;line-height:27px;text-align:center;"><span style="color:#1a1ac0">小</span></div>
<div style="left:1px;top:579px;width:81px;height:26px;background:#0066ff;line-height:27px;text-align:center;color:#fff;z-index:2">中超</div>
<div style="left:83px;top:579px;width:77px;height:25px;background:#f0f0f0;line-height:27px;text-align:center;">25-05-01</div>
<div style="left:161px;top:579px;width:132px;height:25px;background:#f0f0f0;line-height:27px;text-align:center;"><span style="color:#1f801f">上海海港</span></div>
<div style="left:294px;top:579px;width:91px;height:25px;background:#f0f0f0;line-height:27px;text-align:center;"><span style="color:#c41c1c">1-2</span>(1-1)</div>
<div style="left:386px;top:579px;width:39px;height:25px;background:#f0f0f0;line-height:27px;text-align:center;">5-6</div>
<div style="left:426px;top:579px;width:75px;height:25px;background:#f0f0f0;line-height:27px;text-align:center;">北京国安</div>
<div style="left:502px;top:579px;width:44px;height:25px;background:#fdf9f6;line-height:27px;text-align:center;">0.89</div>
<div style="left:547px;top:579px;width:96px;height:25px;background:#fdf9f6;line-height:27px;text-align:center;">平手</div>
<div style="left:644px;top:579px;width:45px;height:25px;background:#fdf9f6;line-height:27px;text-align:center;">0.97</div>
<div style="left:690px;top:579px;width:66px;height:25px;background:#eff7fb;line-height:27px;text-align:center;">2.25</div>
<div style="left:757px;top:579px;width:66px;height:25px;background:#eff7fb;line-height:27px;text-align:center;">3.84</div>
<div style="left:824px;top:579px;width:68px;height:25px;background:#eff7fb;line-height:27px;text-align:center;">2.64</div>
<div style="left:893px;top:579px;width:38px;height:25px;background:#f0f0f0;line-height:27px;text-align:center;"><span style="color:#1a1ac0">负</span></div>
<div style="left:932px;top:579px;width:38px;height:25px;background:#f0f0f0;line-height:27px;text-align:center;"><span style="color:#1a1ac0">输</span></div>
<div style="left:971px;top:579px;width:57px;height:25px;background:#f0f0f0;line-height:27px;text-align:center;"><span style="color:#1a1ac0">小</span></div>
<div style="left:1px;top:605px;width:81px;height:26px;background:#0066ff;line-height:27px;text-align:center;color:#fff;z-index:2">中超</div>
<div style="left:83px;top:605px;width:77px;height:25px;background:#ffffff;line-height:27px;text-align:center;">25-04-25</div>
<div style="left:161px;top:605px;width:132px;height:25px;background:#ffffff;line-height:27px;text-align:center;">云南玉昆</div>
<div style="left:294px;top:605px;width:91px;height:25px;background:#ffffff;line-height:27px;text-align:center;"><span style="color:#c41c1c">2-3</span>(0-1)</div>
<div style="left:386px;top:605px;width:39px;height:25px;background:#ffffff;line-height:27px;text-align:center;">9-1</div>
<div style="left:426px;top:605px;width:75px;height:25px;background:#ffffff;line-height:27px;text-align:center;"><span style="color:#1f801f">上海海港</span></div>
<div style="left:502px;top:605px;width:44px;height:25px;background:#fdf9f6;line-height:27px;text-align:center;">0.85</div>
<div style="left:547px;top:605px;width:96px;height:25px;background:#fdf9f6;line-height:27px;text-align:center;">受平/半</div>
<div style="left:644px;top:605px;width:45px;height:25px;background:#fdf9f6;line-height:27px;text-align:center;">1.01</div>
<div style="left:690px;top:605px;width:66px;height:25px;background:#eff7fb;line-height:27px;text-align:center;">3.62</div>
<div style="left:757px;top:605px;width:66px;height:25px;background:#eff7fb;line-height:27px;text-align:center;">3.75</div>
<div style="left:824px;top:605px;width:68px;height:25px;background:#eff7fb;line-height:27px;text-align:center;">1.87</div>
<div style="left:893px;top:605px;width:38px;height:25px;background:#ffffff;line-height:27px;text-align:center;"><span style="color:#cc1818">胜</span></div>
<div style="left:932px;top:605px;width:38px;height:25px;background:#ffffff;line-height:27px;text-align:center;"><span style="color:#cc1818">赢</span></div>
<div style="left:971px;top:605px;width:57px;height:25px;background:#ffffff;line-height:27px;text-align:center;"><span style="color:#cc1818">大</span></div>
<div style="left:1px;top:631px;width:81px;height:26px;background:#0066ff;line-height:27px;text-align:center;color:#fff;z-index:2">中超</div>
<div style="left:83px;top:631px;width:77px;height:25px;background:#f0f0f0;line-height:27px;text-align:center;">25-04-20</div>
<div style="left:161px;top:631px;width:132px;height:25px;background:#f0f0f0;line-height:27px;text-align:center;"><span style="color:#1f801f">上海海港</span></div>
<div style="left:294px;top:631px;width:91px;height:25px;background:#f0f0f0;line-height:27px;text-align:center;"><span style="color:#c41c1c">1-3</span>(1-2)</div>
<div style="left:386px;top:631px;width:39px;height:25px;background:#f0f0f0;line-height:27px;text-align:center;">4-2</div>
<div style="left:426px;top:631px;width:75px;height:25px;background:#f0f0f0;line-height:27px;text-align:center;">成都蓉城</div>
<div style="left:502px;top:631px;width:44px;height:25px;background:#fdf9f6;line-height:27px;text-align:center;">0.96</div>
<div style="left:547px;top:631px;width:96px;height:25px;background:#fdf9f6;line-height:27px;text-align:center;">受平/半</div>
<div style="left:644px;top:631px;width:45px;height:25px;background:#fdf9f6;line-height:27px;text-align:center;">0.90</div>
<div style="left:690px;top:631px;width:66px;height:25px;background:#eff7fb;line-height:27px;text-align:center;">2.67</div>
<div style="left:757px;top:631px;width:66px;height:25px;background:#eff7fb;line-height:27px;text-align:center;">3.43</div>
<div style="left:824px;top:631px;width:68px;height:25px;background:#eff7fb;line-height:27px;text-align:center;">2.41</div>
<div style="left:893px;top:631px;width:38px;height:25px;background:#f0f0f0;line-height:27px;text-align:center;"><span style="color:#1a1ac0">负</span></div>
<div style="left:932px;top:631px;width:38px;height:25px;background:#f0f0f0;line-height:27px;text-align:center;"><span style="color:#1a1ac0">输</span></div>
<div style="left:971px;top:631px;width:57px;height:25px;background:#f0f0f0;line-height:27px;text-align:center;"><span style="color:#cc1818">大</span></div>
<div style="left:1px;top:657px;width:81px;height:26px;background:#0066ff;line-height:27px;text-align:center;color:#fff;z-index:2">中超</div>
<div style="left:83px;top:657px;width:77px;height:25px;background:#ffffff;line-height:27px;text-align:center;">25-04-16</div>
<div style="left:161px;top:657px;width:132px;height:25px;background:#ffffff;line-height:27px;text-align:center;">天津津门虎</div>
<div style="left:294px;top:657px;width:91px;height:25px;background:#ffffff;line-height:27px;text-align:center;"><span style="color:#c41c1c">1-4</span>(0-3)</div>
<div style="left:386px;top:657px;width:39px;height:25px;background:#ffffff;line-height:27px;text-align:center;">4-1</div>
<div style="left:426px;top:657px;width:75px;height:25px;background:#ffffff;line-height:27px;text-align:center;"><span style="color:#1f801f">上海海港</span></div>
<div style="left:502px;top:657px;width:44px;height:25px;background:#fdf9f6;line-height:27px;text-align:center;">0.86</div>
<div style="left:547px;top:657px;width:96px;height:25px;background:#fdf9f6;line-height:27px;text-align:center;">受球半</div>
<div style="left:644px;top:657px;width:45px;height:25px;background:#fdf9f6;line-height:27px;text-align:center;">1.00</div>
<div style="left:690px;top:657px;width:66px;height:25px;background:#eff7fb;line-height:27px;text-align:center;">6.51</div>
<div style="left:757px;top:657px;width:66px;height:25px;background:#eff7fb;line-height:27px;text-align:center;">4.89</div>
<div style="left:824px;top:657px;width:68px;height:25px;background:#eff7fb;line-height:27px;text-align:center;">1.39</div>
<div style="left:893px;top:657px;width:38px;height:25px;background:#ffffff;line-height:27px;text-align:center;"><span style="color:#cc1818">胜</span></div>
<div style="left:932px;top:657px;width:38px;height:25px;background:#ffffff;line-height:27px;text-align:center;"><span style="color:#cc1818">赢</span></div>
<div style="left:971px;top:657px;width:57px;height:25px;background:#ffffff;line-height:27px;text-align:center;"><span style="color:#cc1818">大</span></div>
<div style="left:1px;top:683px;width:81px;height:25px;background:#0066ff;line-height:27px;text-align:center;color:#fff;z-index:2">中超</div>
<div style="left:83px;top:683px;width:77px;height:25px;background:#f0f0f0;line-height:27px;text-align:center;">25-04-06</div>
<div style="left:161px;top:683px;width:132px;height:25px;background:#f0f0f0;line-height:27px;text-align:center;"><span class="bd">1</span><span style="color:#1f801f">上海海港</span></div>
<div style="left:294px;top:683px;width:91px;height:25px;background:#f0f0f0;line-height:27px;text-align:center;"><span style="color:#c41c1c">1-1</span>(1-0)</div>
<div style="left:386px;top:683px;width:39px;height:25px;background:#f0f0f0;line-height:27px;text-align:center;">8-10</div>
<div style="left:426px;top:683px;width:75px;height:25px;background:#f0f0f0;line-height:27px;text-align:center;">上海申花</div>
<div style="left:502px;top:683px;width:44px;height:25px;background:#fdf9f6;line-height:27px;text-align:center;">0.96</div>
<div style="left:547px;top:683px;width:96px;height:25px;background:#fdf9f6;line-height:27px;text-align:center;">受平/半</div>
<div style="left:644px;top:683px;width:45px;height:25px;background:#fdf9f6;line-height:27px;text-align:center;">0.90</div>
<div style="left:690px;top:683px;width:66px;height:25px;background:#eff7fb;line-height:27px;text-align:center;">2.91</div>
<div style="left:757px;top:683px;width:66px;height:25px;background:#eff7fb;line-height:27px;text-align:center;">3.38</div>
<div style="left:824px;top:683px;width:68px;height:25px;background:#eff7fb;line-height:27px;text-align:center;">2.26</div>
<div style="left:893px;top:683px;width:38px;height:25px;background:#f0f0f0;line-height:27px;text-align:center;"><span style="color:#1f801f">平</span></div>
<div style="left:932px;top:683px;width:38px;height:25px;background:#f0f0f0;line-height:27px;text-align:center;"><span style="color:#cc1818">赢</span></div>
<div style="left:971px;top:683px;width:57px;height:25px;background:#f0f0f0;line-height:27px;text-align:center;"><span style="color:#1a1ac0">小</span></div>
<div style="left:2px;top:709px;width:1026px;height:25px;background:#ffffff;line-height:27px;text-align:center;letter-spacing:0.2px;">近<span style="color:#c41c1c">10</span>场,胜5平3负2, 胜率:<span style="color:#c41c1c">50%</span> 让胜率:<span style="color:#c41c1c">60%</span> 大率:<span style="color:#c41c1c">60%</span> 单率:<span style="color:#c41c1c">30%</span></div>
<div style="left:1px;top:409px;width:1028px;height:1px;background:#bdbdbd"></div>
<div style="left:501px;top:429px;width:528px;height:1px;background:#bdbdbd"></div>
<div style="left:1px;top:448px;width:1028px;height:1px;background:#bdbdbd"></div>
<div style="left:1px;top:474px;width:1028px;height:1px;background:#bdbdbd"></div>
<div style="left:1px;top:500px;width:1028px;height:1px;background:#bdbdbd"></div>
<div style="left:1px;top:526px;width:1028px;height:1px;background:#bdbdbd"></div>
<div style="left:1px;top:552px;width:1028px;height:1px;background:#bdbdbd"></div>
<div style="left:1px;top:578px;width:1028px;height:1px;background:#bdbdbd"></div>
<div style="left:1px;top:604px;width:1028px;height:1px;background:#bdbdbd"></div>
<div style="left:1px;top:630px;width:1028px;height:1px;background:#bdbdbd"></div>
<div style="left:1px;top:656px;width:1028px;height:1px;background:#bdbdbd"></div>
<div style="left:1px;top:682px;width:1028px;height:1px;background:#bdbdbd"></div>
<div style="left:1px;top:708px;width:1028px;height:1px;background:#bdbdbd"></div>
<div style="left:1px;top:734px;width:1028px;height:1px;background:#bdbdbd"></div>
<div style="left:1px;top:409px;width:1px;height:326px;background:#bdbdbd"></div>
<div style="left:82px;top:409px;width:1px;height:300px;background:#bdbdbd"></div>
<div style="left:160px;top:409px;width:1px;height:300px;background:#bdbdbd"></div>
<div style="left:293px;top:409px;width:1px;height:300px;background:#bdbdbd"></div>
<div style="left:385px;top:409px;width:1px;height:300px;background:#bdbdbd"></div>
<div style="left:425px;top:409px;width:1px;height:300px;background:#bdbdbd"></div>
<div style="left:501px;top:409px;width:1px;height:300px;background:#bdbdbd"></div>
<div style="left:546px;top:429px;width:1px;height:280px;background:#bdbdbd"></div>
<div style="left:643px;top:429px;width:1px;height:280px;background:#bdbdbd"></div>
<div style="left:689px;top:409px;width:1px;height:300px;background:#bdbdbd"></div>
<div style="left:756px;top:429px;width:1px;height:280px;background:#bdbdbd"></div>
<div style="left:823px;top:429px;width:1px;height:280px;background:#bdbdbd"></div>
<div style="left:892px;top:409px;width:1px;height:300px;background:#bdbdbd"></div>
<div style="left:931px;top:429px;width:1px;height:280px;background:#bdbdbd"></div>
<div style="left:970px;top:429px;width:1px;height:280px;background:#bdbdbd"></div>
<div style="left:1028px;top:409px;width:1px;height:326px;background:#bdbdbd"></div>
<div style="left:1px;top:474px;width:81px;height:1px;background:#80b6ff;z-index:3"></div>
<div style="left:1px;top:500px;width:81px;height:1px;background:#80b6ff;z-index:3"></div>
<div style="left:1px;top:526px;width:81px;height:1px;background:#80b6ff;z-index:3"></div>
<div style="left:1px;top:552px;width:81px;height:1px;background:#80b6ff;z-index:3"></div>
<div style="left:1px;top:578px;width:81px;height:1px;background:#80b6ff;z-index:3"></div>
<div style="left:1px;top:604px;width:81px;height:1px;background:#80b6ff;z-index:3"></div>
<div style="left:1px;top:630px;width:81px;height:1px;background:#80b6ff;z-index:3"></div>
<div style="left:1px;top:656px;width:81px;height:1px;background:#80b6ff;z-index:3"></div>
<div style="left:1px;top:682px;width:81px;height:1px;background:#80b6ff;z-index:3"></div>
<div style="left:82px;top:449px;width:1px;height:259px;background:#e2ebf8;z-index:3"></div>
<div style="left:1px;top:448px;width:81px;height:1px;background:#e4e8ef;z-index:3"></div>
<div style="left:1px;top:708px;width:81px;height:1px;background:#dfe9fb;z-index:3"></div>
</body></html>
